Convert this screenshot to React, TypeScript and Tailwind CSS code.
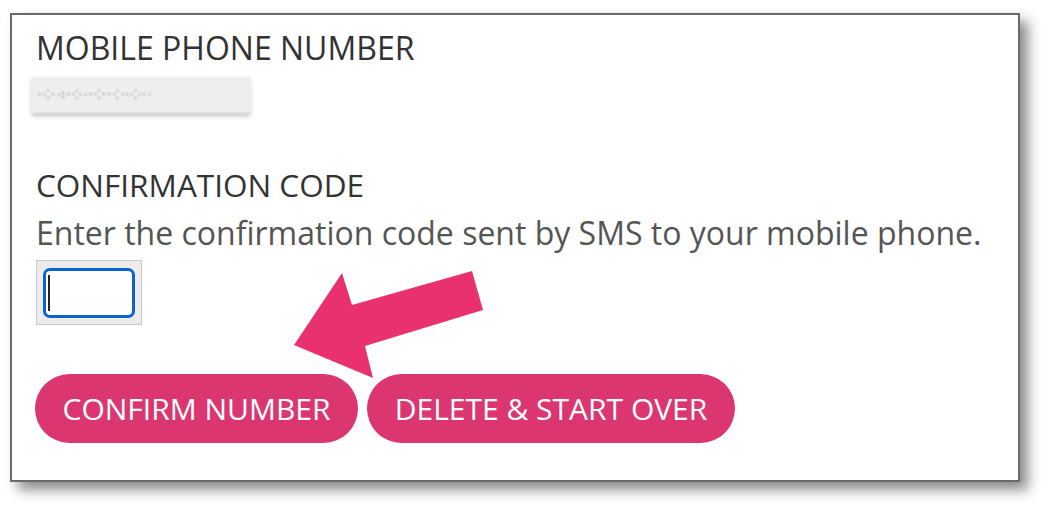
import React from "react";

export default function App() {
  return (
    <div
      className="relative w-[1054px] h-[517px] bg-white overflow-hidden"
      style={{ fontFamily: '"Open Sans", "Noto Sans", sans-serif' }}
    >
      <div className="pt-[13px] pl-[10px]">
        <div className="w-[1010px] h-[469px] border-2 border-[#6a6a6a] bg-white shadow-[8px_8px_12px_rgba(0,0,0,0.45)] pl-[24px] pt-[14px]">
          <div className="text-[32px] leading-[38px] text-[#333333]">MOBILE PHONE NUMBER</div>
          <div className="mt-[10px] ml-[-4px] w-[218px] h-[36px] bg-[#eeeeee] blur-[1px] shadow-[0_3px_4px_rgba(0,0,0,0.25)] flex items-center px-[6px] text-[12px] tracking-[2px] text-[#555555] overflow-hidden whitespace-nowrap">
            ·⁖·ᐧ꞉·⁘ᐧ·⁖··⁖ᐧ·⁘·ᐧ
          </div>
          <div className="mt-[53px] text-[31.5px] leading-[38px] text-[#333333]">CONFIRMATION CODE</div>
          <div className="mt-[10px] text-[32px] leading-[38px] text-[#555555] whitespace-nowrap">
            Enter the confirmation code sent by SMS to your mobile phone.
          </div>
          <div className="mt-[8px] w-[106px] h-[65px] bg-[#ececec] border border-[#c8c8c8] flex items-center justify-center">
            <div className="relative w-[92px] h-[50px] bg-white border-[3px] border-[#0b63d0] rounded-[7px]">
              <div className="absolute left-[2px] top-[4px] w-[2px] h-[36px] bg-[#222]" />
            </div>
          </div>
          <div className="mt-[49px] ml-[-1px] flex gap-[9px]">
            <button className="w-[323px] h-[69px] rounded-full bg-[#dc3670] text-white text-[30px] leading-none flex items-center justify-center">
              CONFIRM NUMBER
            </button>
            <button className="w-[368px] h-[69px] rounded-full bg-[#dc3670] text-white text-[30px] leading-none flex items-center justify-center">
              DELETE &amp; START OVER
            </button>
          </div>
        </div>
      </div>
      <svg
        className="absolute left-0 top-0 pointer-events-none"
        width="1054"
        height="517"
        viewBox="0 0 1054 517"
      >
        <polygon
          points="294,345 342,273 352,305 472,271 483,310 365,346 373,378"
          fill="#e8316d"
        />
      </svg>
    </div>
  );
}
